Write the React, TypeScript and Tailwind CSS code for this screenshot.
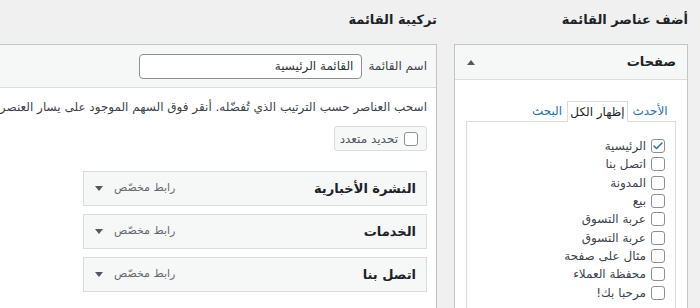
import { Check } from 'lucide-react'

const pages = [
  { label: 'الرئيسية', checked: true },
  { label: 'اتصل بنا', checked: false },
  { label: 'المدونة', checked: false },
  { label: 'بيع', checked: false },
  { label: 'عربة التسوق', checked: false },
  { label: 'عربة التسوق', checked: false },
  { label: 'مثال على صفحة', checked: false },
  { label: 'محفظة العملاء', checked: false },
  { label: 'مرحبا بك!', checked: false },
]

const menuItems = ['النشرة الأخبارية', 'الخدمات', 'اتصل بنا']

function Checkbox({ checked }: { checked: boolean }) {
  return (
    <span className="flex h-[14px] w-[14px] flex-none items-center justify-center rounded-[3px] border border-[#8c8f94] bg-white">
      {checked && <Check className="h-[12px] w-[12px] text-[#2271b1]" strokeWidth={3} />}
    </span>
  )
}

function TriangleDown() {
  return <span className="h-0 w-0 border-x-[4px] border-t-[5px] border-x-transparent border-t-[#50575e]" />
}

export default function App() {
  return (
    <div
      dir="rtl"
      className="flex h-[308px] w-[700px] gap-[17px] overflow-hidden bg-[#f0f0f1] pr-[12px] text-[#1d2327]"
      style={{ fontFamily: 'Tahoma, "DejaVu Sans", sans-serif' }}
    >
      {/* add menu items */}
      <div className="w-[234px] flex-none">
        <h2 className="mt-[11px] mb-[15px] h-[18px] text-[13px] leading-[18px] font-semibold">أضف عناصر القائمة</h2>
        <div className="h-[300px] border border-[#c3c4c7] bg-white">
          <div className="flex h-[35px] items-center justify-between border-b border-[#dcdcde] bg-[#f6f7f7] pr-[11px] pl-[12px]">
            <span className="text-[13px] font-semibold">صفحات</span>
            <span className="h-0 w-0 border-x-[4px] border-b-[5px] border-x-transparent border-b-[#50575e]" />
          </div>
          <div className="px-[11px] pt-[21px]">
            <div className="flex items-end pr-[4px] text-[12px] leading-[20px]">
              <span className="w-[44px] text-center text-[#2271b1]">الأحدث</span>
              <span className="relative z-10 -mb-px w-[61px] border border-b-0 border-[#dcdcde] bg-white text-center text-[#1d2327]">
                إظهار الكل
              </span>
              <span className="w-[40px] text-center text-[#2271b1]">البحث</span>
            </div>
            <div className="h-[200px] border border-[#dcdcde] bg-white pt-[15px] pr-[10px]">
              {pages.map((p, i) => (
                <div key={i} className="flex h-[18.3px] items-center gap-[5px] text-[12px] text-[#3c434a]">
                  <Checkbox checked={p.checked} />
                  <span>{p.label}</span>
                </div>
              ))}
            </div>
          </div>
        </div>
      </div>

      {/* menu structure */}
      <div className="w-[600px] flex-none">
        <h2 className="mt-[11px] mb-[15px] h-[18px] text-[13px] leading-[18px] font-semibold">تركيبة القائمة</h2>
        <div className="h-[300px] border border-[#c3c4c7] bg-white">
          <div className="flex h-[43px] items-center gap-[6px] border-b border-[#dcdcde] bg-[#f6f7f7] pr-[9px]">
            <span className="flex-none text-[12px] whitespace-nowrap text-[#3c434a]">اسم القائمة</span>
            <div className="flex h-[25px] w-[223px] flex-none items-center rounded-[4px] border border-[#8c8f94] bg-white px-[8px] text-[12px] text-[#2c3338]">
              القائمة الرئيسية
            </div>
          </div>
          <div className="pr-[9px]">
            <p className="mt-[10px] text-[12px] leading-[18px] whitespace-nowrap text-[#3c434a]">
              اسحب العناصر حسب الترتيب الذي تُفضّله. أنقر فوق السهم الموجود على يسار العنصر للكشف عن خيارات تكوين إضافية.
            </p>
            <div className="mt-[10px] flex h-[25px] w-[93px] items-center gap-[6px] rounded-[3px] border border-[#dcdcde] bg-[#f6f7f7] pr-[8px] text-[12px] text-[#50575e]">
              <Checkbox checked={false} />
              <span>تحديد متعدد</span>
            </div>
            <div className="mt-[20px] flex flex-col gap-[8px]">
              {menuItems.map((m) => (
                <div
                  key={m}
                  className="flex h-[35px] w-[344px] items-center justify-between border border-[#dcdcde] bg-[#f6f7f7] pr-[10px] pl-[11px]"
                >
                  <span className="text-[13px] font-bold text-[#1d2327]">{m}</span>
                  <span className="flex items-center gap-[11px]">
                    <span className="text-[11px] text-[#646970]">رابط مخصّص</span>
                    <TriangleDown />
                  </span>
                </div>
              ))}
            </div>
          </div>
        </div>
      </div>
    </div>
  )
}
